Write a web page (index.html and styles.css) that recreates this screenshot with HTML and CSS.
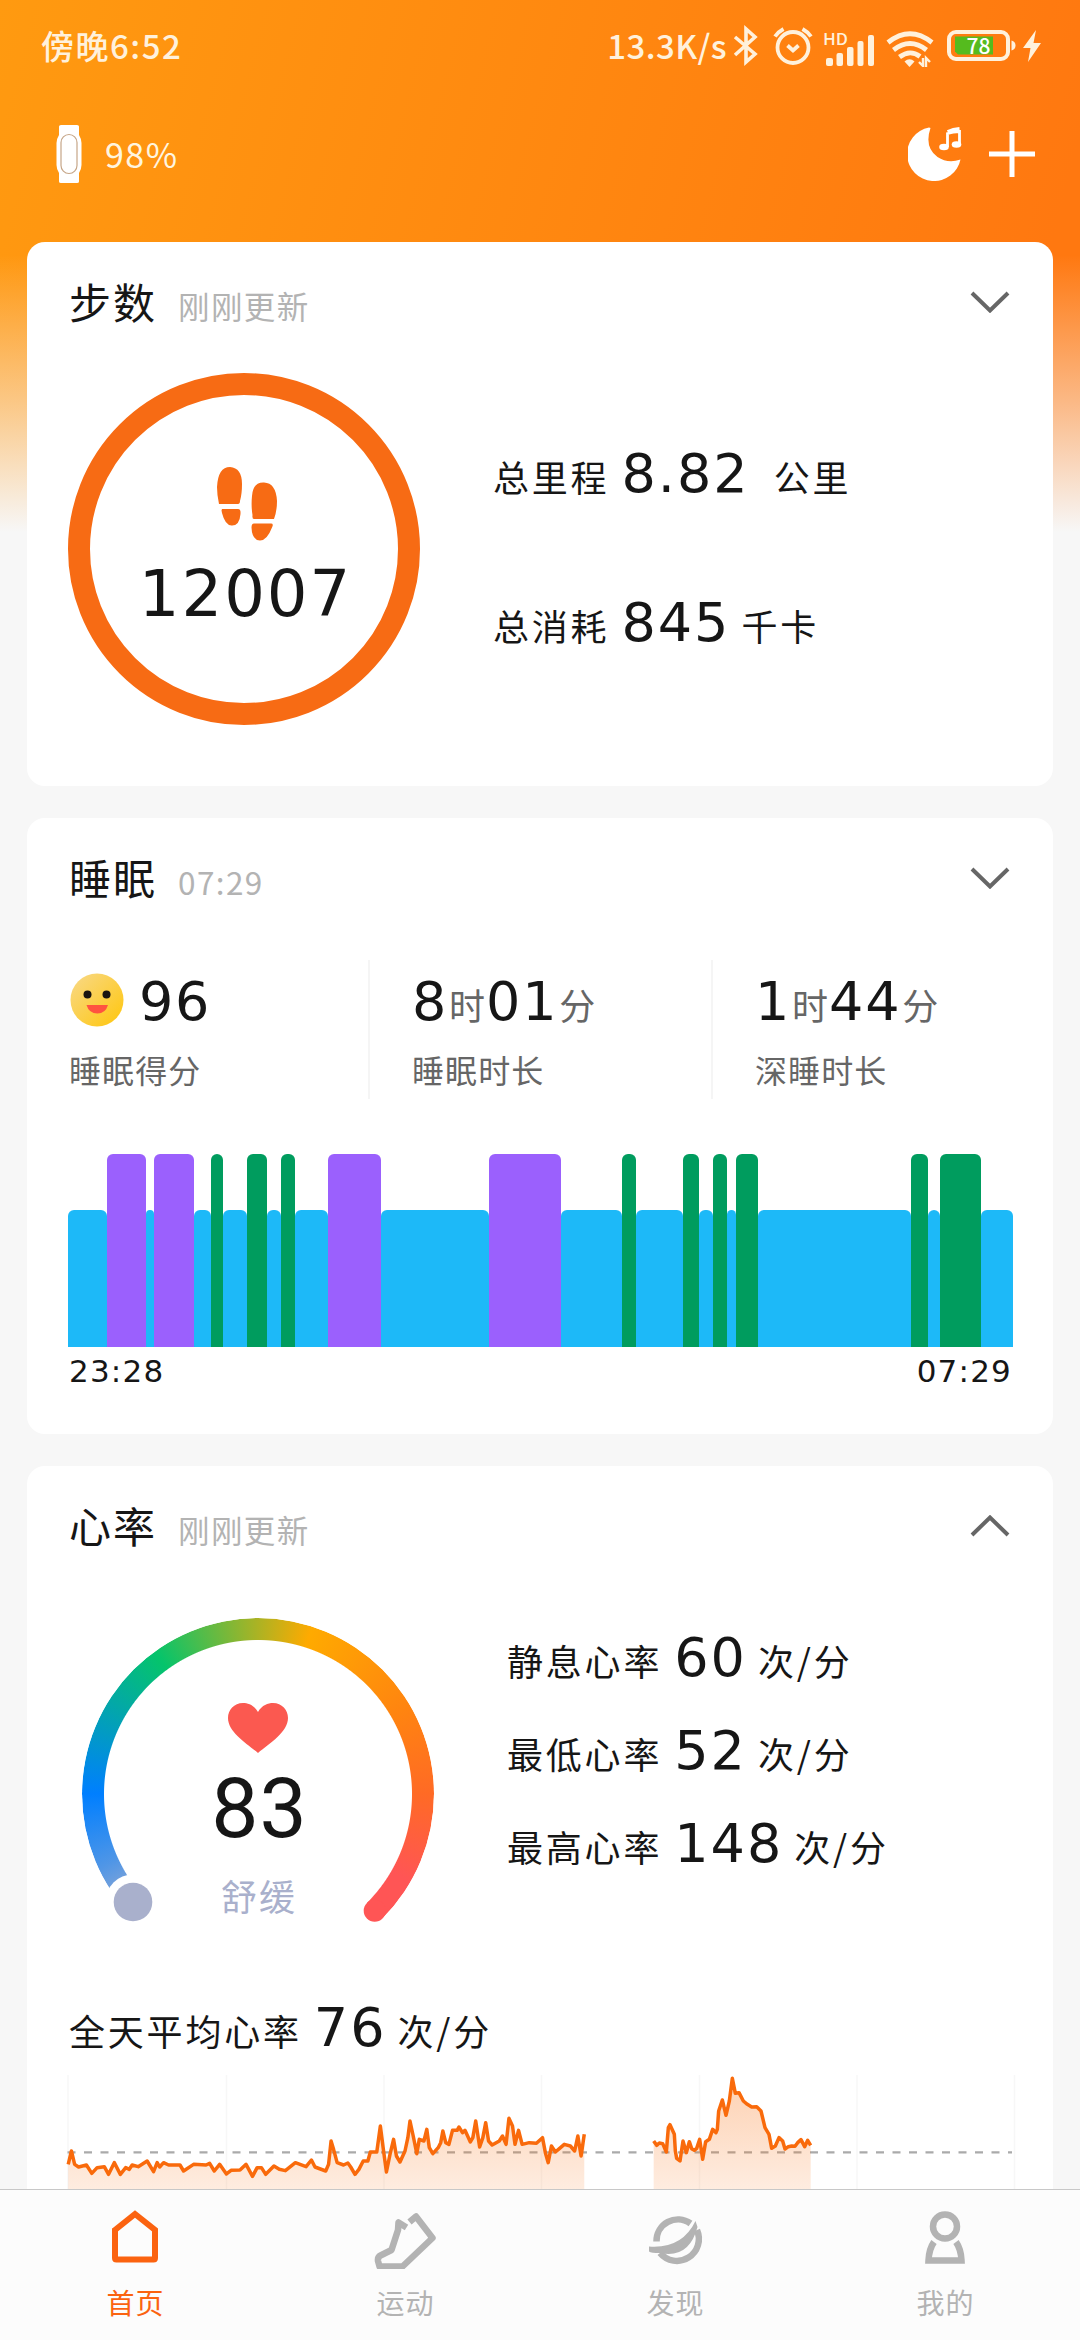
FILE: index.html
```html
<!DOCTYPE html>
<html lang="zh-CN">
<head>
<meta charset="utf-8">
<title>首页</title>
<link rel="stylesheet" href="styles.css">
</head>
<body>
<div class="screen">
  <div class="status">
    <span class="status-time">傍晚6:52</span>
    <div class="status-icons">
      <span class="speed">13.3K/s</span>
      <svg class="bt" width="26" height="42" viewBox="0 0 26 42"><path d="M2 12 22 29 13 37V4l9 8L2 30" fill="none" stroke="currentColor" stroke-width="3.6"/></svg>
      <svg class="alarm" width="40" height="42" viewBox="0 0 40 42"><circle cx="20" cy="22.500" r="15.500" fill="none" stroke="currentColor" stroke-width="3.800"/><path d="M14.500 20.500l5.500 5 5.500-5M2 11.500Q5 7 10.500 4M38 11.500Q35 7 29.500 4" fill="none" stroke="currentColor" stroke-width="3.800"/></svg>
      <svg class="signal" width="52" height="42" viewBox="0 0 52 42"><text x="0" y="20" font-size="16" textLength="25" lengthAdjust="spacingAndGlyphs" class="hd">HD</text><g fill="currentColor"><rect x="3" y="33" width="7" height="8" rx="2"/><rect x="13.500" y="28" width="6.500" height="13" rx="2"/><rect x="24" y="22" width="6.500" height="19" rx="2"/><rect x="34.500" y="16" width="6" height="25" rx="2"/><rect x="45" y="10" width="6" height="31" rx="2"/></g></svg>
      <svg class="wifi" width="48" height="42" viewBox="0 0 48 42"><g fill="none" stroke="currentColor" stroke-width="4.800"><path d="M2 17.500Q24 0 46 17.500"/><path d="M7.500 25Q24 12 40.500 25"/><path d="M13.500 32Q24 24 34 31.500"/></g><path d="M18.500 36.500q5-4.500 10 0L23.500 42z" fill="currentColor"/><path d="M33 37l4 4v-8M44 37l-4-4v9" fill="none" stroke="currentColor" stroke-width="2.400"/></svg>
      <svg class="battery" width="70" height="32" viewBox="0 0 70 32"><rect x="2" y="2" width="59" height="27" rx="7" fill="none" stroke="currentColor" stroke-width="4"/><path d="M8 6.500h38v18H11l-3-3z" fill="#55bb1e"/><path d="M64.500 10.500q4 1 4 5t-4 5z" fill="currentColor"/><text x="31.500" y="23.500" font-size="21" text-anchor="middle" class="pct">78</text></svg>
      <svg class="bolt" width="18" height="32" viewBox="0 0 18 32"><path d="M13 0 0 18h7.500L5 32 18 13h-7.500z" fill="currentColor"/></svg>
    </div>
  </div>
  <div class="toolbar">
    <svg width="26" height="58" viewBox="0 0 26 58"><path d="M3 1.500Q3 0 5 0h16q2 0 2 1.500V10q2.500 4 2.500 8v22q0 4-2.500 8v8.500q0 1.500-2 1.500H5q-2 0-2-1.500V48Q.500 44 .500 40V18q0-4 2.500-8z" fill="#fff"/><rect x="5" y="9.500" width="16" height="39" rx="8" fill="none" stroke="#c6a688" stroke-width="1.200"/></svg>
    <span class="band-level">98%</span>
    <svg class="moon" width="54" height="54" viewBox="0 0 54 54"><path d="M21 .500A27 27 0 1 0 52.500 32.500Q40 37 29.500 30 16 20 22.500 1z" fill="#fff"/><path d="M39.500 20V6.500Q45 4.500 51.500 4.500V17M39.500 4.500Q45 2 51.500 1.500" fill="none" stroke="#fff" stroke-width="2.800"/><ellipse cx="36" cy="20" rx="4.800" ry="3.300" fill="#fff"/><ellipse cx="48.500" cy="17.500" rx="4.800" ry="3.300" fill="#fff"/></svg>
    <svg class="plus" width="46" height="46" viewBox="0 0 46 46"><path d="M0 23h46M23 0v46" stroke="#fff" stroke-width="5"/></svg>
  </div>

  <main class="cards">
    <section class="card steps">
      <header class="card-head"><h2>步数</h2><small>刚刚更新</small><svg class="chev" width="40" height="22" viewBox="0 0 40 22"><path d="M2 2l18 17.500L38 2"/></svg></header>
      <div class="steps-body">
        <div class="ring">
          <svg class="feet" width="60" height="74" viewBox="0 0 60 74" fill="#f76b14"><path d="M2 37Q0 28 0 20 1 0 13 0q12 1 12 17 0 10-2 17 0 3-2 3z"/><path d="M5 42h16q3 0 2.500 5-1 12-9 11.500Q8 58 5 46q-1-3 0-4z"/><path d="M37 52Q35 52 35.500 48 34 39 35 29 36 15 47 15.500 59 16 60 34q0 10-3 18z"/><path d="M37 56.500h17q3 0 1 4-5 13-12 13-8-.500-8.500-13 0-4 2.500-4z"/></svg>
          <strong>12007</strong>
        </div>
        <div class="totals">
          <p class="metric"><span>总里程</span><b class="km">8.82</b><span>公里</span></p>
          <p class="metric"><span>总消耗</span><b>845</b><span>千卡</span></p>
        </div>
      </div>
    </section>

    <section class="card sleep">
      <header class="card-head"><h2>睡眠</h2><small>07:29</small><svg class="chev" width="40" height="22" viewBox="0 0 40 22"><path d="M2 2l18 17.500L38 2"/></svg></header>
      <div class="sleep-stats">
        <div class="stat"><div class="value"><svg class="face" width="54" height="54" viewBox="0 0 54 54"><defs><linearGradient id="f" x1="0" y1="0" x2="1" y2="1"><stop offset="0" stop-color="#f8d98a"/><stop offset="1" stop-color="#ffc60a"/></linearGradient></defs><circle cx="27" cy="27" r="26.500" fill="url(#f)"/><circle cx="17.500" cy="21.500" r="4" fill="#191410"/><circle cx="36.500" cy="21.500" r="4" fill="#191410"/><path d="M16.500 32h21.500q-2.500 8.500-10.700 8.500T16.500 32z" fill="#ff5340"/></svg><b>96</b></div><span>睡眠得分</span></div>
        <div class="stat"><div class="value"><b>8</b><i>时</i><b>01</b><i>分</i></div><span>睡眠时长</span></div>
        <div class="stat"><div class="value"><b>1</b><i>时</i><b>44</b><i>分</i></div><span>深睡时长</span></div>
      </div>
      <div class="stages">
        <i class="light" style="width:39.4px"></i><i class="deep" style="width:39px"></i><i class="light" style="width:8px"></i><i class="deep" style="width:39.2px"></i><i class="light" style="width:17.8px"></i><i class="rem" style="width:12px"></i><i class="light" style="width:24px"></i><i class="rem" style="width:19.2px"></i><i class="light" style="width:14px"></i><i class="rem" style="width:14px"></i><i class="light" style="width:33px"></i><i class="deep" style="width:53.4px"></i><i class="light" style="width:108px"></i><i class="deep" style="width:72.5px"></i><i class="light" style="width:61px"></i><i class="rem" style="width:13.5px"></i><i class="light" style="width:47px"></i><i class="rem" style="width:16px"></i><i class="light" style="width:14px"></i><i class="rem" style="width:14px"></i><i class="light" style="width:9.5px"></i><i class="rem" style="width:21.5px"></i><i class="light" style="width:153px"></i><i class="rem" style="width:17.5px"></i><i class="light" style="width:12px"></i><i class="rem" style="width:41px"></i><i class="light" style="width:31.5px"></i>
      </div>
      <div class="stage-times"><span>23:28</span><span>07:29</span></div>
    </section>

    <section class="card heart">
      <header class="card-head"><h2>心率</h2><small>刚刚更新</small><svg class="chev" width="40" height="22" viewBox="0 0 40 22"><path d="M2 20L20 2.500 38 20"/></svg></header>
      <div class="heart-body">
        <div class="gauge">
          <div class="arc"></div>
          <svg class="arc-ends" width="352" height="352" viewBox="0 0 352 352"><circle cx="292.700" cy="292.700" r="11" fill="#ff5555"/><circle cx="51" cy="284" r="27.500" fill="#fff"/><circle cx="51" cy="284" r="19.300" fill="#a9b0cc"/></svg>
          <svg class="heart-icon" width="60" height="50" viewBox="0 0 60 50"><path d="M30 9C26 2 20 0 15 0 6 0 0 7 0 15c0 14 18 25 30 35C42 40 60 29 60 15 60 7 54 0 45 0 40 0 34 2 30 9z" fill="#fb5950"/></svg>
          <strong>83</strong>
          <em>舒缓</em>
        </div>
        <div class="rates">
          <p class="metric"><span>静息心率</span><b>60</b><span>次/分</span></p>
          <p class="metric"><span>最低心率</span><b>52</b><span>次/分</span></p>
          <p class="metric"><span>最高心率</span><b>148</b><span>次/分</span></p>
        </div>
      </div>
      <p class="metric average"><span>全天平均心率</span><b>76</b><span>次/分</span></p>
      <svg class="trend" width="950" height="130" viewBox="66 2070 950 130">
        <defs>
          <linearGradient id="a" gradientUnits="userSpaceOnUse" x1="0" y1="350" x2="0" y2="690"><stop offset="0" stop-color="#f97316" stop-opacity=".33"/><stop offset="1" stop-color="#f97316" stop-opacity=".13"/></linearGradient>
        </defs>
        <path d="M68 2074v120M226.500 2074v120M384 2074v120M541.500 2074v120M699.500 2074v120M857 2074v120M1014.500 2074v120" stroke="#f7f7f7" stroke-width="1.500"/>
        <path d="M67.500 2151.300H1012" stroke="#aaa" stroke-width="2.200" stroke-dasharray="8 8.500"/>
        <g transform="translate(40 1960) scale(.35714 .33333)">
          <path class="area" d="M79 690V610L88 570 97 610 108 618 130 612 145 637 160 620 180 617 192 640 208 605 225 640 240 620 250 625 258 612 275 617 300 600 318 632 328 605 335 618 346 605 360 612 392 612 402 630 430 610 465 612 475 607 488 630 503 610 522 639 535 628 560 627 577 610 595 646 608 620 620 620 632 640 655 615 687 629 715 605 745 617 760 597 770 618 800 630 808 610 815 540 832 605 850 612 870 610 882 640 905 600 918 600 925 573 943 573 953 495 970 633 990 535 1008 603 1022 570 1036 480 1055 578 1062 540 1075 540 1083 505 1100 578 1115 560 1128 510 1145 550 1155 508 1180 502 1205 543 1220 480 1231 558 1248 485 1260 548 1275 550 1295 525 1305 550 1313 472 1330 550 1340 508 1350 550 1390 547 1407 530 1423 605 1435 555 1450 570 1475 550 1497 570 1506 525 1515 585 1524 520V690z"/>
          <path class="line" d="M79 610L88 570 97 610 108 618 130 612 145 637 160 620 180 617 192 640 208 605 225 640 240 620 250 625 258 612 275 617 300 600 318 632 328 605 335 618 346 605 360 612 392 612 402 630 430 610 465 612 475 607 488 630 503 610 522 639 535 628 560 627 577 610 595 646 608 620 620 620 632 640 655 615 670 625 687 629 715 605 745 617 760 597 770 618 800 630 808 610 815 540 822 565 832 605 850 612 862 606 870 618 882 640 893 625 905 600 918 600 925 573 943 573 953 495 962 570 970 633 980 580 990 535 998 585 1008 603 1022 570 1030 530 1036 480 1045 525 1055 578 1062 535 1075 540 1083 505 1090 560 1100 578 1115 560 1122 545 1128 510 1136 545 1145 550 1155 508 1168 508 1173 498 1183 515 1190 508 1205 543 1212 530 1220 480 1231 558 1240 530 1248 485 1256 540 1266 552 1286 540 1295 525 1305 550 1313 472 1323 495 1330 550 1340 508 1350 550 1370 545 1390 547 1407 530 1415 575 1423 605 1432 555 1443 573 1455 562 1468 550 1485 555 1497 570 1506 525 1515 585 1524 520"/>
        </g>
        <g transform="translate(560 1960) scale(.33333)">
          <path class="area" d="M281 690V540L290 553 305 545 319 573 325 500 330 491 343 520 350 590 360 600 369 540 379 575 388 542 403 570 419 535 428 595 437 542 448 535 458 505 470 515 476 450 487 417 498 463 508 420 517 352 526 395 537 395 550 420 575 438 590 437 603 450 615 500 627 520 635 562 646 555 657 530 668 540 675 563 695 555 705 556 723 536 734 557 743 538 752 553V690z"/>
          <path class="line" d="M281 540L290 553 298 546 308 548 319 573 325 500 330 491 343 520 346 570 350 592 360 600 369 540 379 575 388 542 395 563 403 568 410 562 419 535 428 595 437 542 448 535 458 505 468 515 472 505 476 450 487 417 498 463 508 420 517 352 526 397 537 395 550 420 562 430 575 438 590 437 603 450 615 500 627 520 635 562 646 555 657 530 668 540 675 564 685 557 695 555 705 556 713 545 723 536 734 557 743 538 752 553"/>
        </g>
      </svg>
    </section>
  </main>

  <nav class="tabs">
    <a class="tab active"><svg width="62" height="62" viewBox="0 0 62 62" fill="none" stroke="currentColor" stroke-width="6"><path d="M11 23 31 7l20 16v28q0 1.500-1.500 1.500h-37Q11 52.500 11 51z"/></svg><span>首页</span></a>
    <a class="tab"><svg width="62" height="62" viewBox="1 0 62 62" fill="none" stroke="currentColor" stroke-width="6.500" stroke-linejoin="round"><path d="M33.500 20.500 25.500 15.500 25 23 18.500 43 7.500 48.500Q4.500 50 5 54l1.500 5.500H29.500L59.500 31 43 9.500 36.500 15"/></svg><span>运动</span></a>
    <a class="tab"><svg width="62" height="62" viewBox="1 0 62 62" fill="none" stroke="currentColor" stroke-width="6.500"><path d="M13.500 34.500A21.500 21.500 0 0 1 47.500 16.500M54 23A22 22 0 0 1 17 46"/><path d="M6 39.500Q39 42 52.500 14l2 6Q46 52 17 46 8 46 6 44.500z" fill="currentColor" stroke="none"/></svg><span>发现</span></a>
    <a class="tab"><svg width="62" height="62" viewBox="0 0 62 62" fill="none" stroke="currentColor" stroke-width="6.500"><circle cx="31" cy="19.500" r="12"/><path d="M20 35q-5 7-5.500 18.500h33Q47 42 42 35"/></svg><span>我的</span></a>
  </nav>
</div>
</body>
</html>
```
FILE: styles.css
```css
* { box-sizing: border-box; }
body, h2, p { margin: 0; }
body {
  font-family: "Noto Sans CJK SC", sans-serif;
  color: #161616;
}
b, strong, i, em, h2 { font-weight: 400; font-style: normal; }
svg { display: block; flex: none; }

.screen {
  width: 1080px;
  height: 2340px;
  overflow: hidden;
  display: flex;
  flex-direction: column;
  background:
    linear-gradient(to bottom, rgba(247,247,247,0) 255px, rgba(247,247,247,.5) 400px, #f7f7f7 532px),
    linear-gradient(105deg, #ff9a10 0, #ff7810 1080px);
}

.status {
  height: 92px;
  flex: none;
  display: flex;
  justify-content: space-between;
  align-items: center;
  padding: 0 39px 0 41px;
  color: #fff1dc;
  font-size: 33px;
  font-weight: 500;
  line-height: 48px;
}
.status-time { letter-spacing: 1.500px; margin-top: -3px; }
.status-icons { display: flex; align-items: center; }
.speed { letter-spacing: .4px; margin: -3px 6px 0 0; }
.alarm { margin-left: 14px; }
.signal { margin-left: 10px; }
.wifi { margin-left: 11px; }
.battery { margin-left: 13px; }
.bolt { margin-left: 6px; }
.hd { fill: currentColor; font-weight: 500; }
.pct { fill: #fff; font-weight: 500; }

.toolbar {
  height: 150px;
  flex: none;
  display: flex;
  align-items: center;
  padding: 0 45px 27px 56px;
  color: #fff;
}
.band-level { font-size: 34px; margin-left: 23px; line-height: 48px; letter-spacing: 1.500px; color: #fff5df; }
.moon { margin-left: auto; }
.plus { margin-left: 27px; }

.cards {
  flex: 1;
  min-height: 0;
  overflow: hidden;
  padding: 0 27px;
  display: flex;
  flex-direction: column;
  gap: 32px;
}
.card { flex: none; background: #fff; border-radius: 18px; padding: 0 41px; }
.steps { height: 544px; }
.sleep { height: 616px; }
.heart { height: 800px; }

.card-head { height: 120px; display: flex; align-items: center; padding: 0 2px 0 1px; }
.card-head h2 { font-size: 42px; line-height: 60px; letter-spacing: 2px; margin-top: -2px; }
.card-head small { font-size: 31.500px; line-height: 46px; letter-spacing: 1.400px; color: #b3b3b3; margin: 5px 0 0 21px; }
.chev { margin-left: auto; fill: none; stroke: #666; stroke-width: 4; }

.metric {
  display: flex;
  align-items: baseline;
  font-size: 36px;
  line-height: 60px;
  letter-spacing: 2.800px;
}
.metric b { font-family: "DejaVu Sans", sans-serif; font-size: 54px; letter-spacing: 2px; margin: 0 11px 0 12px; line-height: 60px; }
.metric .km { margin-right: 24px; }

.steps-body { display: flex; align-items: flex-start; padding-top: 11px; }
.ring {
  width: 352px; height: 352px;
  border: 22px solid #f76b14;
  border-radius: 50%;
  display: flex; flex-direction: column; align-items: center;
  padding-top: 72px;
}
.feet { margin-left: 5px; }
.ring strong { font-family: "DejaVu Sans", sans-serif; font-size: 64px; line-height: 80px; letter-spacing: 2px; margin: 13px 0 0 3px; }
.totals { padding: 71px 0 0 73px; display: flex; flex-direction: column; gap: 87px; }

.sleep-stats { display: flex; height: 139px; margin-top: 22px; padding-left: 1px; }
.stat { width: 343px; padding-left: 42px; border-left: 2px solid #f5f5f5; display: flex; flex-direction: column; }
.stat:first-child { width: 299px; padding-left: 0; border: 0; }
.stat:last-child { width: auto; }
.stat > span { font-size: 32px; line-height: 46px; letter-spacing: 1.100px; color: #666; margin-top: 4px; }
.value { display: flex; align-items: baseline; height: 82px; padding-top: 12px; }
.value b { font-family: "DejaVu Sans", sans-serif; font-size: 54px; line-height: 60px; letter-spacing: 1.700px; }
.value i { font-size: 36px; line-height: 60px; color: #666; margin: 0 1px; }
.face { align-self: flex-start; margin: 1px 15px 0 1px; }

.stages { height: 193px; margin-top: 55px; display: flex; align-items: flex-end; }
.stages i { flex: none; height: 193px; border-radius: 6px 6px 0 0; }
.stages .light { height: 137px; background: #1db9f8; }
.stages .deep { background: #9b60fd; }
.stages .rem { background: #009c5e; }
.stage-times { display: flex; justify-content: space-between; font: 31px/46px "DejaVu Sans", sans-serif; letter-spacing: 1.200px; padding: 1px 0 0 1px; }

.heart-body { display: flex; align-items: flex-start; padding: 32px 0 0 14px; height: 384px; }
.gauge { position: relative; width: 352px; height: 352px; display: flex; flex-direction: column; align-items: center; padding-top: 85px; }
.arc {
  position: absolute; inset: 0; border-radius: 50%;
  background: conic-gradient(from 225deg, #a9b0cc 0, #5096e6 20deg, #007fff 45deg, #05c46b 99deg, #ffaa00 153deg, #ff8410 195deg, #ff6a25 225deg, #ff5555 255deg, #ff5555 270deg, transparent 270deg);
  -webkit-mask: radial-gradient(circle, transparent 153.500px, #000 154.500px);
  mask: radial-gradient(circle, transparent 153.500px, #000 154.500px);
}
.arc-ends { position: absolute; inset: 0; }
.gauge strong { font: 84px/100px Roboto, sans-serif; letter-spacing: 1px; margin: 6px 0 0 3px; }
.gauge em { font-size: 36px; line-height: 52px; letter-spacing: 2px; color: #a9b0cc; margin: 10px 0 0 2px; }
.rates { display: flex; flex-direction: column; gap: 31px; padding: 10px 0 0 73px; }
.average { margin-top: 28px; padding-left: 1px; }
.trend { margin: 11px 0 0 -2px; }
.area { fill: url(#a); }
.line { fill: none; stroke: #f96a0b; stroke-width: 3.500px; vector-effect: non-scaling-stroke; stroke-linejoin: round; }

.tabs {
  flex: none;
  height: 151px;
  border-top: 1.500px solid #c8c8c8;
  background: #fcfcfc;
  display: grid;
  grid-template-columns: repeat(4, 1fr);
}
.tab { display: flex; flex-direction: column; align-items: center; padding-top: 17px; color: #b3b3b3; }
.tab span { font-size: 28px; line-height: 40px; letter-spacing: 1px; margin: 13px 0 0 1px; }
.active { color: #fb6310; }
```
